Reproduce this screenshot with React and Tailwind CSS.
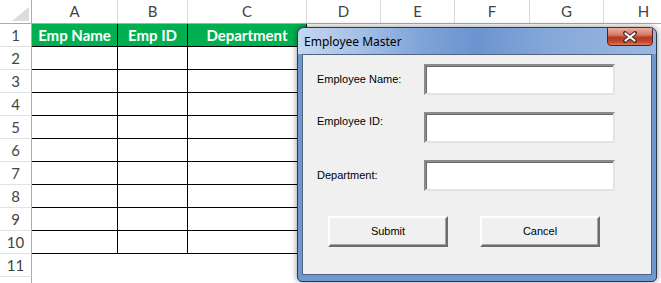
import React from "react";

const cols = [
  { key: "A", w: "w-[86px]" },
  { key: "B", w: "w-[70px]" },
  { key: "C", w: "w-[119px]" },
  { key: "D", w: "w-[74px]" },
  { key: "E", w: "w-[74px]" },
  { key: "F", w: "w-[75px]" },
  { key: "G", w: "w-[74px]" },
  { key: "H", w: "w-[80px]" },
];

const headers = ["Emp Name", "Emp ID", "Department"];
const rows = [1, 2, 3, 4, 5, 6, 7, 8, 9, 10, 11, 12];

const Sheet = () => (
  <div className="font-['Lato','Liberation_Sans',sans-serif] text-[15px] text-[#444]">
    {/* column letters */}
    <div className="flex h-[24px] border-b border-[#ababab]">
      <div className="w-[32px] shrink-0 border-r border-[#ababab] flex items-end justify-end pr-[2px] pb-[2px]">
        <svg width="17" height="14" viewBox="0 0 17 14">
          <polygon points="17,0 17,14 0,14" fill="#dcdcdc" />
        </svg>
      </div>
      {cols.map((c) => (
        <div key={c.key} className={`${c.w} shrink-0 border-r border-[#dadada] flex items-center justify-center`}>
          {c.key}
        </div>
      ))}
    </div>

    {rows.map((r) => {
      const inTable = r <= 10;
      return (
        <div key={r} className="flex h-[23px]">
          <div className="w-[32px] shrink-0 border-r border-b border-r-[#ababab] border-b-[#e1e1e1] flex items-center justify-center">
            {r <= 11 ? r : ""}
          </div>
          {cols.map((c, i) => {
            if (i > 2 || !inTable) return <div key={c.key} className={`${c.w} shrink-0`} />;
            if (r === 1)
              return (
                <div
                  key={c.key}
                  className={`${c.w} shrink-0 bg-[#00b050] border-r border-b border-black flex items-center justify-center text-white font-bold`}
                >
                  {headers[i]}
                </div>
              );
            return <div key={c.key} className={`${c.w} shrink-0 border-r border-b border-black`} />;
          })}
        </div>
      );
    })}
  </div>
);

const Field = ({ label, top, labelTop }) => (
  <div className={`flex ${labelTop ? "items-start" : "items-center"} ${top}`}>
    <span className={`w-[107px] shrink-0 ${labelTop ? "pt-[1px]" : ""}`}>{label}</span>
    <div className="w-[191px] h-[31px] bg-white border-2 border-t-[#8a8a8a] border-l-[#8a8a8a] border-b-[#e3e3e3] border-r-[#e3e3e3] shadow-[inset_1px_1px_0_#6a6a6a]" />
  </div>
);

const Dialog = () => (
  <div className="absolute left-[297px] top-[27px] w-[360px] h-[255px] rounded-t-[7px] rounded-b-[5px] border border-[#2c3b54] bg-[#6f98d3] shadow-[0_0_6px_rgba(0,0,0,0.45)] flex flex-col overflow-hidden">
    {/* title bar */}
    <div className="relative h-[26px] shrink-0 bg-[linear-gradient(90deg,#c3d7f0_0%,#a9c3e7_15%,#7ea3d8_35%,#6b94cf_50%,#86a8d9_70%,#9ab7df_100%)] flex items-center pl-[6px] pt-[2px]">
      <span className="font-['Noto_Sans','Liberation_Sans',sans-serif] text-[12px] text-black">Employee Master</span>
      <div className="absolute right-[3px] top-[-1px] w-[46px] h-[19px] rounded-b-[4px] border border-[#5a1f17] bg-[linear-gradient(180deg,#eab0a2_0%,#d57a66_40%,#b63a24_55%,#c2472f_80%,#dc7a5c_100%)] flex items-center justify-center">
        <svg width="16" height="12" viewBox="0 0 16 12">
          <path d="M3 2 L13 10 M13 2 L3 10" stroke="#4a2a25" strokeWidth="4" strokeLinecap="round" />
          <path d="M3.5 2.5 L12.5 9.5 M12.5 2.5 L3.5 9.5" stroke="#ffffff" strokeWidth="2.2" strokeLinecap="round" />
        </svg>
      </div>
    </div>

    {/* client area */}
    <div className="mx-[4px] mb-[6px] flex-1 border border-[#52647e] bg-[#f0f0f0] pl-[14px] pt-[9px] font-['Liberation_Sans',sans-serif] text-[11px] text-black">
      <Field label="Employee Name:" top="" />
      <Field label="Employee ID:" top="mt-[17px]" labelTop />
      <Field label="Department:" top="mt-[17px]" />
      <div className="flex gap-[32px] mt-[25px] ml-[11px]">
        {["Submit", "Cancel"].map((b) => (
          <button
            key={b}
            className="w-[120px] h-[31px] bg-[#f0f0f0] border-2 border-t-white border-l-white border-b-[#6c6c6c] border-r-[#6c6c6c] shadow-[inset_-1px_-1px_0_#a5a5a5] flex items-center justify-center"
          >
            {b}
          </button>
        ))}
      </div>
    </div>
  </div>
);

export default function App() {
  return (
    <div className="relative w-[661px] h-[283px] overflow-hidden bg-white">
      <Sheet />
      <Dialog />
    </div>
  );
}
